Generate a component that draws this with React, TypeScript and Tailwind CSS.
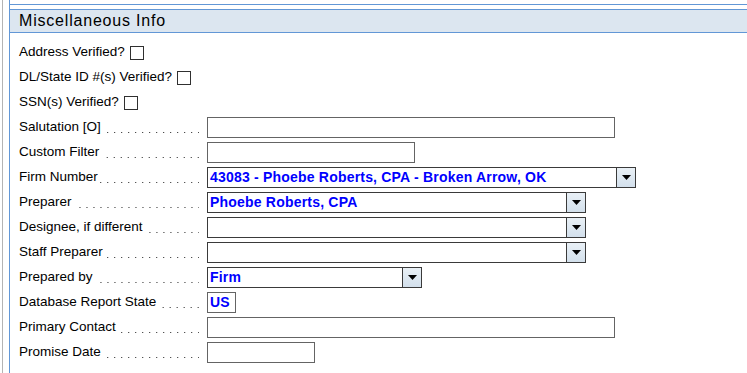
import type { ReactNode } from 'react';

const FONT = { fontFamily: '"Liberation Sans", Arial, sans-serif' };

interface RowProps {
  label: string;
  children: ReactNode;
}

// Label with dotted leader, then the field
function FieldRow({ label, children }: RowProps) {
  return (
    <div className="flex h-[25px] items-center">
      <div className="flex w-[180px] shrink-0 items-center text-[13.5px] text-black">
        <span className="whitespace-nowrap">{label}</span>
        <span className="ml-[2px] h-px min-w-0 flex-1 translate-y-[5px] bg-[linear-gradient(to_right,transparent_6px,#222_6px)] bg-[length:7px_1px] bg-right bg-repeat-x" />
      </div>
      <div className="ml-[8px]">{children}</div>
    </div>
  );
}

function CheckRow({ label }: { label: string }) {
  return (
    <div className="flex h-[25px] items-center text-[13.5px] text-black">
      <span className="whitespace-nowrap">{label}</span>
      <span className="ml-[5px] h-[14px] w-[14px] border border-[#303030] bg-white" />
    </div>
  );
}

function TextBox({ width, value }: { width: string; value?: string }) {
  return (
    <div
      className={`flex h-[21px] items-center border border-[#646464] bg-white px-[2px] text-[14px] font-bold tracking-[0.2px] text-[#0000ff] ${width}`}
    >
      {value}
    </div>
  );
}

function DropDown({ width, value }: { width: string; value?: string }) {
  return (
    <div className={`flex h-[21px] border border-[#3a3a3a] bg-white ${width}`}>
      <div className="flex flex-1 items-center overflow-hidden whitespace-nowrap px-[2px] text-[14px] font-bold tracking-[0.2px] text-[#0000ff]">
        {value}
      </div>
      <div className="flex w-[19px] items-center justify-center border-l border-[#3a3a3a] bg-gradient-to-b from-[#e9f0f6] to-[#d3e0ec]">
        <svg width="9" height="5" viewBox="0 0 9 5">
          <path d="M0 0 H9 L4.5 5 Z" fill="#000" />
        </svg>
      </div>
    </div>
  );
}

export default function App() {
  return (
    <div className="flex h-[373px] w-[747px] overflow-hidden bg-white" style={FONT}>
      <div className="w-[9px] shrink-0">
        <div className="ml-[2px] h-full w-px bg-[#b4b4b4]" />
      </div>
      <div className="flex-1 border-l border-[#6297d6]">
        <div className="h-[5px] border-b border-[#6297d6]" />
        <div className="mt-[4px] flex h-[24px] items-center border-y border-[#6297d6] bg-[#dce6f0] pl-[9px] text-[16px] tracking-[0.8px] text-black">
          Miscellaneous Info
        </div>
        <div className="mt-[7px] pl-[9px]">
          <CheckRow label="Address Verified?" />
          <CheckRow label="DL/State ID #(s) Verified?" />
          <CheckRow label="SSN(s) Verified?" />
          <FieldRow label="Salutation [O]">
            <TextBox width="w-[408px]" />
          </FieldRow>
          <FieldRow label="Custom Filter">
            <TextBox width="w-[208px]" />
          </FieldRow>
          <FieldRow label="Firm Number">
            <DropDown width="w-[429px]" value="43083 - Phoebe Roberts, CPA - Broken Arrow, OK" />
          </FieldRow>
          <FieldRow label="Preparer">
            <DropDown width="w-[379px]" value="Phoebe Roberts, CPA" />
          </FieldRow>
          <FieldRow label="Designee, if different">
            <DropDown width="w-[379px]" />
          </FieldRow>
          <FieldRow label="Staff Preparer">
            <DropDown width="w-[379px]" />
          </FieldRow>
          <FieldRow label="Prepared by">
            <DropDown width="w-[215px]" value="Firm" />
          </FieldRow>
          <FieldRow label="Database Report State">
            <TextBox width="w-[29px]" value="US" />
          </FieldRow>
          <FieldRow label="Primary Contact">
            <TextBox width="w-[408px]" />
          </FieldRow>
          <FieldRow label="Promise Date">
            <TextBox width="w-[108px]" />
          </FieldRow>
        </div>
      </div>
    </div>
  );
}
